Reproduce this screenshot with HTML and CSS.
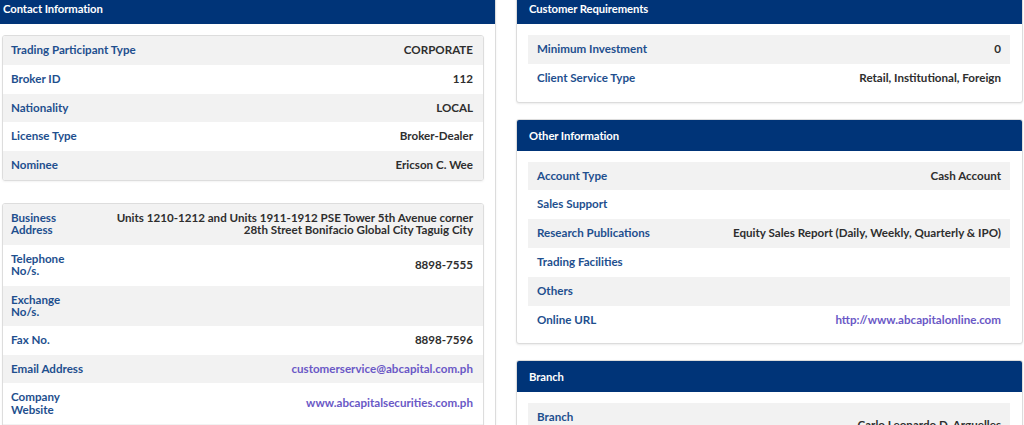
FILE: index.html
```html
<!DOCTYPE html>
<html lang="en">
<head>
<meta charset="utf-8">
<title>Broker Details</title>
<link rel="stylesheet" href="styles.css">
</head>
<body>
<div class="page">
  <section class="card card-left">
    <div class="card-head">Contact Information</div>
    <div class="card-body">
      <div class="table">
        <div class="row"><div class="label">Trading Participant Type</div><div class="value">CORPORATE</div></div>
        <div class="row"><div class="label">Broker ID</div><div class="value">112</div></div>
        <div class="row"><div class="label">Nationality</div><div class="value">LOCAL</div></div>
        <div class="row"><div class="label">License Type</div><div class="value">Broker-Dealer</div></div>
        <div class="row"><div class="label">Nominee</div><div class="value">Ericson C. Wee</div></div>
      </div>
      <div class="table table-fixed">
        <div class="row"><div class="label">Business Address</div><div class="value">Units 1210-1212 and Units 1911-1912 PSE Tower 5th Avenue corner 28th Street Bonifacio Global City Taguig City</div></div>
        <div class="row"><div class="label">Telephone No/s.</div><div class="value">8898-7555</div></div>
        <div class="row"><div class="label">Exchange No/s.</div><div class="value"></div></div>
        <div class="row"><div class="label">Fax No.</div><div class="value">8898-7596</div></div>
        <div class="row"><div class="label">Email Address</div><div class="value"><a class="link" href="#">customerservice@abcapital.com.ph</a></div></div>
        <div class="row"><div class="label">Company Website</div><div class="value"><a class="link" href="#">www.abcapitalsecurities.com.ph</a></div></div>
        <div class="row row-empty"><div class="label"></div><div class="value"></div></div>
      </div>
    </div>
  </section>

  <div class="col">
    <section class="card">
      <div class="card-head">Customer Requirements</div>
      <div class="card-body card-body-right">
        <div class="list">
          <div class="row"><div class="label">Minimum Investment</div><div class="value">0</div></div>
          <div class="row"><div class="label">Client Service Type</div><div class="value">Retail, Institutional, Foreign</div></div>
        </div>
      </div>
    </section>

    <section class="card">
      <div class="card-head">Other Information</div>
      <div class="card-body card-body-right">
        <div class="list">
          <div class="row"><div class="label">Account Type</div><div class="value">Cash Account</div></div>
          <div class="row"><div class="label">Sales Support</div><div class="value"></div></div>
          <div class="row"><div class="label">Research Publications</div><div class="value">Equity Sales Report (Daily, Weekly, Quarterly &amp; IPO)</div></div>
          <div class="row"><div class="label">Trading Facilities</div><div class="value"></div></div>
          <div class="row"><div class="label">Others</div><div class="value"></div></div>
          <div class="row"><div class="label">Online URL</div><div class="value"><a class="link" href="#">http://www.abcapitalonline.com</a></div></div>
        </div>
      </div>
    </section>

    <section class="card">
      <div class="card-head">Branch</div>
      <div class="card-body card-body-right">
        <div class="list">
          <div class="row row-top"><div class="label">Branch</div><div class="value value-low">Carlo Leonardo D. Arguelles</div></div>
        </div>
      </div>
    </section>
  </div>
</div>
</body>
</html>
```

FILE: styles.css
```css
html, body {
  margin: 0;
  padding: 0;
  background: #ffffff;
  overflow: hidden;
}

body {
  font-family: Lato, "Open Sans", Arial, sans-serif;
  font-size: 11.6px;
  font-weight: 700;
  color: #2e2e2e;
}

.page {
  display: grid;
  grid-template-columns: 506px 507px;
  column-gap: 20px;
  align-items: start;
  margin-top: -8px;
  margin-left: -10px;
}

.col {
  display: flex;
  flex-direction: column;
  gap: 16px;
}

.card {
  border: 1px solid #dcdcdc;
  border-radius: 3px;
  background: #ffffff;
  box-shadow: 0 1px 2px rgba(0, 0, 0, 0.08);
  overflow: hidden;
}

.card-left {
  min-height: 470px;
}

.card-head {
  height: 31px;
  line-height: 31px;
  padding-left: 12px;
  background: #003478;
  color: #ffffff;
  font-size: 11.3px;
  font-weight: 700;
  letter-spacing: -0.1px;
}

.card-body {
  padding: 11px 11px 9px 11px;
}

.card-body-right {
  padding: 11px 12px 9px 11px;
}

.table {
  border: 1px solid #dddddd;
  border-radius: 3px;
  box-shadow: 0 1px 2px rgba(0, 0, 0, 0.05);
  margin-bottom: 22px;
  overflow: hidden;
}

.row {
  display: flex;
  align-items: center;
  justify-content: space-between;
  padding: 8px 10px 8px 8px;
  line-height: 12.8px;
}

.table-fixed .row {
  line-height: 12.4px;
}

.row-empty {
  min-height: 25px;
}

.row:nth-child(odd) {
  background: #f2f2f2;
}

.list .row {
  padding: 8px 9px 8px 9px;
}

.row-top {
  align-items: flex-start;
}

.label {
  color: #1e4f8e;
  flex: 0 0 auto;
}

.value {
  flex: 1 1 auto;
  text-align: right;
  color: #2e2e2e;
}

.value-low {
  padding-top: 8px;
}

.table-fixed .label {
  width: 76px;
}

.table-fixed .value {
  padding-left: 20px;
}

.link {
  color: #6a58c6;
  text-decoration: none;
}
```
